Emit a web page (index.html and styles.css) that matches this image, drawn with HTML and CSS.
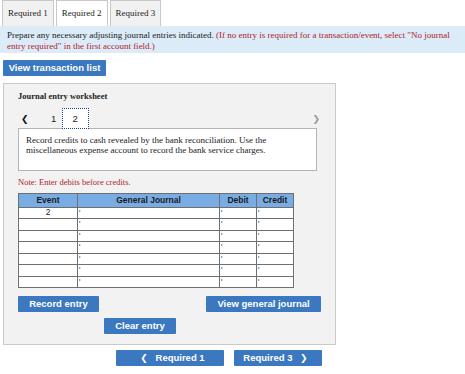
FILE: index.html
```html
<!DOCTYPE html>
<html lang="en">
<head>
    <meta charset="UTF-8">
    <title>Journal entry</title>
    <link rel="stylesheet" href="styles.css">
</head>
<body>
    <div class="tabs">
        <div class="tab">Required 1</div>
        <div class="tab active">Required 2</div>
        <div class="tab">Required 3</div>
    </div>

    <div class="instructions">
        Prepare any necessary adjusting journal entries indicated.
        <span class="red">(If no entry is required for a transaction/event, select "No journal entry required" in the first account field.)</span>
    </div>

    <button class="btn btn-list">View transaction list</button>

    <div class="panel">
        <div class="panel-title">Journal entry worksheet</div>

        <!-- Pager -->
        <div class="pager">
            <span class="arrow left">&#10094;</span>
            <span class="page first">1</span>
            <span class="page current">2</span>
            <span class="arrow right">&#10095;</span>
        </div>

        <div class="desc">
            Record credits to cash revealed by the bank reconciliation. Use the<br>
            miscellaneous expense account to record the bank service charges.
        </div>

        <div class="note">Note: Enter debits before credits.</div>

        <!-- Entry table -->
        <table class="journal">
            <tr>
                <th class="c-event">Event</th>
                <th class="c-acct">General Journal</th>
                <th class="c-debit">Debit</th>
                <th class="c-credit">Credit</th>
            </tr>
            <tr><td class="event">2</td><td class="mark"></td><td class="mark"></td><td class="mark"></td></tr>
            <tr><td></td><td class="mark"></td><td class="mark"></td><td class="mark"></td></tr>
            <tr><td></td><td class="mark"></td><td class="mark"></td><td class="mark"></td></tr>
            <tr><td></td><td class="mark"></td><td class="mark"></td><td class="mark"></td></tr>
            <tr><td></td><td class="mark"></td><td class="mark"></td><td class="mark"></td></tr>
            <tr><td></td><td class="mark"></td><td class="mark"></td><td class="mark"></td></tr>
            <tr><td></td><td class="mark"></td><td class="mark"></td><td class="mark"></td></tr>
        </table>

        <div class="actions">
            <button class="btn btn-record">Record entry</button>
            <button class="btn btn-view">View general journal</button>
        </div>
        <div class="actions center">
            <button class="btn btn-clear">Clear entry</button>
        </div>
    </div>

    <div class="bottom-nav">
        <button class="btn btn-prev"><span class="chev">&#10094;</span> Required 1</button>
        <button class="btn btn-next">Required 3 <span class="chev">&#10095;</span></button>
    </div>
</body>
</html>
```

FILE: styles.css
```css
body {
    margin: 0;
    font-family: "Liberation Serif", "Times New Roman", serif;
    color: #222;
    background: #fff;
}

.tabs {
    display: flex;
    gap: 2px;
    padding-left: 2px;
    height: 26px;
}

.tab {
    font-size: 9px;
    line-height: 24px;
    padding: 0 5px;
    border: 1px solid #c8c8c8;
    border-bottom: none;
    background-color: #f1f1f1;
}

.tab.active {
    background-color: #fff;
}

.instructions {
    background-color: #dcebf8;
    font-size: 9px;
    line-height: 10.5px;
    padding: 4px 7px 5px 7px;
    height: 18px;
}

.red {
    color: #b0222a;
}

.btn {
    display: block;
    font-family: "Liberation Sans", Arial, sans-serif;
    font-weight: bold;
    font-size: 9.5px;
    line-height: 16px;
    color: #fff;
    background-color: #3b78bf;
    border: none;
    border-radius: 1px;
    height: 16px;
    padding: 0;
    cursor: pointer;
}

.btn-list {
    margin: 7px 0 0 3px;
    width: 103px;
}

.panel {
    margin: 7px 0 0 3px;
    height: 260px;
    background-color: #f2f2f2;
    border: 1px solid #c9c9c9;
    padding: 0 0 0 14px;
    width: 317px;
}

.panel-title {
    font-size: 8.5px;
    font-weight: bold;
    margin-top: 7px;
    height: 10px;
}

.pager {
    display: flex;
    align-items: center;
    height: 21px;
    margin-top: 7px;
    width: 302px;
}

.arrow {
    font-family: "DejaVu Sans", sans-serif;
    font-size: 9px;
}

.arrow.left {
    margin-left: 3px;
    color: #111;
    font-weight: bold;
}

.arrow.right {
    margin-left: auto;
    color: #999;
}

.page {
    font-family: "Liberation Sans", Arial, sans-serif;
    font-size: 9.5px;
    text-align: center;
}

.page.first {
    margin-left: 20px;
    width: 10px;
}

.page.current {
    margin-left: 3px;
    width: 25px;
    height: 19px;
    line-height: 19px;
    border: 1px dotted #1b3f8a;
    background-color: #fff;
}

.desc {
    margin-top: -1px;
    width: 283px;
    height: 32px;
    background-color: #fff;
    border: 1px solid #b4b4b4;
    font-size: 9px;
    line-height: 10px;
    padding: 6px 7px 3px 7px;
    white-space: nowrap;
}

.note {
    color: #b0222a;
    font-size: 8.5px;
    margin-top: 6px;
    height: 11px;
    margin-bottom: 5px;
}

.journal {
    border-collapse: collapse;
    width: 276px;
    font-family: "Liberation Sans", Arial, sans-serif;
    font-size: 8.5px;
    background-color: #fff;
}

.journal th,
.journal td {
    border: 1px solid #6f6f6f;
    padding: 0;
    height: 10.5px;
    line-height: 9px;
}

.journal th {
    background-color: #78ace2;
    height: 12.5px;
    font-weight: bold;
    color: #1a1a1a;
}

.c-event { width: 58px; }
.c-acct { width: 141px; }
.c-debit { width: 36px; }
.c-credit { width: 36px; }

.journal td.event {
    text-align: center;
}

.journal td.mark {
    position: relative;
}

.journal td.mark::before {
    content: "";
    position: absolute;
    left: 1px;
    top: 2px;
    border-left: 2px solid #4a86c8;
    border-top: 1.5px solid transparent;
    border-bottom: 1.5px solid transparent;
}

.actions {
    display: flex;
    justify-content: space-between;
    width: 303px;
    margin-top: 8px;
}

.actions.center {
    justify-content: flex-start;
    margin-top: 6px;
}

.btn-record { width: 81px; }
.btn-view { width: 115px; }
.btn-clear { width: 72px; margin-left: 86px; }

.bottom-nav {
    display: flex;
    gap: 10px;
    margin: 5px 0 0 116px;
}

.btn-prev { width: 108px; }
.btn-next { width: 88px; }

.chev {
    font-family: "DejaVu Sans", sans-serif;
    font-size: 9px;
    font-weight: bold;
    margin: 0 5px;
}
```
